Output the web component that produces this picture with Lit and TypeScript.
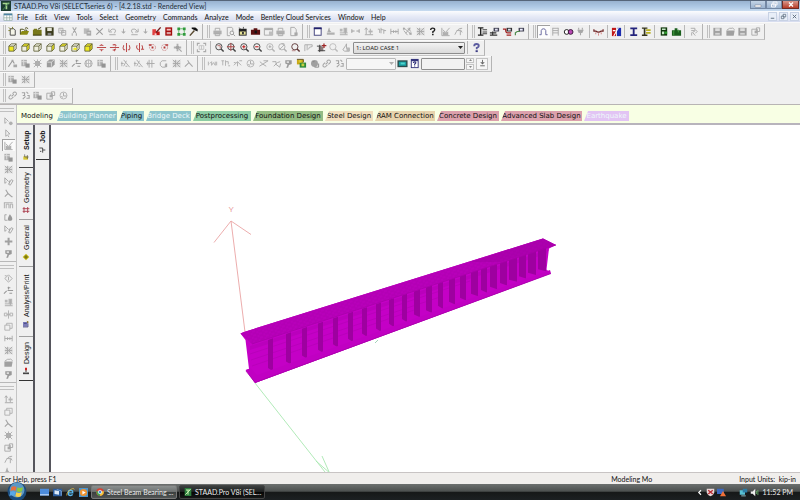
import { LitElement, html, css, svg, nothing } from "lit";
import { customElement } from "lit/decorators.js";
import { styleMap } from "lit/directives/style-map.js";
import { classMap } from "lit/directives/class-map.js";

const G = "#a8a8a8";

/* A stroked path and a filled path on the 12-unit icon grid. */
const s = (d: string, c = G, w = 1) => svg`<path d=${d} fill="none" stroke=${c} stroke-width=${w}></path>`;
const f = (d: string, c = G) => svg`<path d=${d} fill=${c}></path>`;

/* View cube with one or more faces painted yellow. */
const cube = (front: string, top: string, side: string) => svg`
  ${f("M2 4.500h5.500v5.500H2z", front)}${f("M2 4.500L4.500 2H10L7.500 4.500z", top)}${f("M7.500 4.500L10 2v5.500L7.500 10z", side)}
  ${s("M2 4.500h5.500v5.500H2zM2 4.500L4.500 2H10L7.500 4.500M10 2v5.500L7.500 10", "#5c5c34", 0.9)}`;
const Y = "#f0ea24";
const W = "#f0f0e0";
const lens = (c: string, inner: unknown = nothing) => svg`
  <circle cx="5.300" cy="5.200" r="3.400" fill="none" stroke=${c} stroke-width="1"></circle>
  ${s("M7.700 7.600L10.500 10.400", c, 1.6)}${inner}`;
const ring = (inner: unknown) => svg`<circle cx="6" cy="6" r="3.300" fill="none" stroke="#cc8c8c" stroke-dasharray="2 1"></circle>${inner}`;

const icons: Record<string, unknown> = {
  new: svg`${f("M3.500 3h5v7h-5z", "#f4f4e8")}${s("M3.500 3v7h5.500V4.500L7.500 3z", "#444")}${s("M2 1.500l2 2M6 1v2M1.500 5h2", "#7c7c28")}`,
  open: svg`${f("M1 9.500L3 5.500h8L9 9.500z", "#8a8a14")}${s("M1.500 9V3.500h3l1 1h3v1M6.500 2.500q2-1.500 3.500.5", "#444410")}`,
  close: svg`${f("M1 4h9.500v6H1zM2 3h3.500v1H2z", "#77771a")}${s("M6.500 3.500l3.500-2M1 10h9.500", "#333310")}`,
  save: svg`${f("M1.500 1.500h9v9h-9z", "#3c3c1c")}${f("M3.500 2h5v3.500h-5z", "#e6e6d8")}${f("M4 7.500h4v3H4z", "#888")}`,
  copy: svg`${s("M2 2.500h4.500v5H2zM5 5h4.500v5H5z")}${s("M3 4.500h2M6 7h2.500")}`,
  cut: s("M4 1.500l3.500 6M8 1.500L4.500 7.500M3.500 8v2.500M8 8v2.500", G, 1.1),
  paste: svg`${f("M2 2.500h6v6H2z", "#bbb")}${f("M5 5h5v5.500H5z")}${s("M4 2h2M6 7.500h3", "#eee")}`,
  delete: s("M2.500 2.500l7 7M9.500 2.500l-7 7", "#999", 1.1),
  undo: svg`${s("M2 3v3.500h3.500M2.500 6q3-4 6-2.500 2 1.500-.5 4.500M2.500 9.500h7")}`,
  redo: svg`${s("M10 3v3.500H6.500M9.500 6q-3-4-6-2.500-2 1.500.5 4.500M2.500 9.500h7")}`,
  down: svg`${f("M3.500 6h5L6 8.500z")}${s("M6 3v4")}`,
  edit: svg`${f("M1.500 3.500h4v6.500h-4z", "#e04040")}${f("M5.500 6h4v4h-4z", "#c01414")}${s("M10.500 1.500L5.500 7", "#702020", 1.5)}${f("M4 8h2v2H4z", "#f4d0d0")}`,
  calc: svg`${f("M2.500 1.500h7.500v9H2.500z", "#a40c0c")}${f("M4 3h4.500v2H4z", "#f3c3c3")}${f("M4 6.500h4.500v2.500H4z", "#dca0a0")}`,
  grid: svg`${f("M1.500 1.500h3v3h-3zM7.500 1.500h3v3h-3zM1.500 7.500h3v3h-3zM7.500 7.500h3v3h-3z", "#2f9a3c")}${s("M4.500 3h3M3 4.500v3M9 4.500v3M4.500 9h3", "#5cb464")}`,
  hammer: svg`${s("M2 10.500L7 5", "#5a4a30", 1.6)}${f("M4 1.500h4l2.500 2V6L8 5 4 3z", "#111")}`,
  print: svg`${f("M1.500 5h9v4h-9z", "#b0b0b0")}${s("M3.500 5V2.500h5V5M3.500 8.500h5v2h-5z")}`,
  preview: svg`${s("M2.500 1.500h5l1 1.500v3M2.500 1.500v9h3")}<circle cx="7.500" cy="7.500" r="2" fill="none" stroke="#999"></circle>${s("M9 9l2 2", "#999")}`,
  photo: svg`${f("M2 3h8.500v7.500H2z", "#222")}${f("M3 6h6.500v3.500H3z", "#e8e498")}${f("M5.500 6.500h2V9h-2z", "#333")}${s("M2 2l2 1M7 1v2", "#555")}`,
  camera: svg`${f("M1 4h10v5.500H1zM4 2.500h4V4H4z", "#5a1010")}${f("M5 5h2.500v3H5z", "#111")}`,
  window: svg`${s("M1.500 2.500h9v7.500h-9z")}${f("M1.500 2.500h9v2h-9z")}${f("M6.500 6h4v4h-4z", "#bdbdbd")}`,
  doc: svg`${s("M3 1.500h4L9 4v6.500H3z")}${f("M7 7h3.500v3.500H7z")}`,
  frame: svg`${f("M2.500 2.500h8v7.500h-8z", "#fff")}${s("M2.500 2.500h7.500v7.500H2.500z", "#4c4c84", 1.1)}${f("M2 1.500h8.500v2H2z", "#23236c")}`,
  hump: svg`${f("M2 7h8.500v2.500H2zM4 3l3 3.500H2.500z", "#b0b0b0")}${s("M4.500 2v5")}`,
  stack: svg`${f("M2 3h3v3H2zM6 2h4v5H6z", "#b8b8b8")}${s("M2 7.500h8.500M2 9.500h8.500M8 3v6")}`,
  dims: s("M2 3.500v4M10 3.500v4M2 5.500h3M7 5.500h3", "#999", 1),
  updim: svg`${s("M3.500 2v7M2 4l1.500-2L5 4M2 9.500h9M8 3v6")}${f("M6 5h4.500v2H6z", "#b4b4b4")}`,
  pins: s("M2 3.500h2v4M5.500 2v6M5.500 4h2M8.500 3.500v5M8.500 5h2.500"),
  beamdim: svg`${s("M2 3v6M10 3v6M2 6h8")}${f("M4.500 4.500h1v3h-1zM7 4.500h1v3H7z")}`,
  net: svg`${s("M2 2l8 7M2 5l4 5M4 8l5-6M6 3l4 3")}${f("M1 2h2v2H1zM8 7h2.500v2.500H8zM7 2h2v2H7z")}`,
  mesh: svg`${f("M2 2.500h8.500v7.500H2z", "#dadada")}${s("M2 2l8 8M10 2L2 10M5 2v8M2 6h8", "#a8a8a8")}`,
  chart: svg`${s("M2 2v8.500h8.500M3 4l3 3 4.500-5")}${f("M3 6l3 1 3-1v4H3z", "#b0b0b0")}`,
  curve: s("M2 9.500Q5 2 10 2.500M4 5h4v5M8 4l2 3"),
  q: svg`${s("M4 4.300q0-2 2.200-2t2.200 1.800q0 1.300-2 2.100v1.400", "#222", 1.5)}${f("M5.500 8.500h1.700v1.600H5.500z", "#222")}`,
  beamI: svg`${s("M1 2h6M4 2v8M1 10h6", "#222", 1.5)}${s("M6 4h5M6 6.500h5M6 8.500h5", "#444", 1.1)}`,
  beamP: svg`${f("M5 2h6v4H5z", "#445")}${f("M6.500 3h3v2h-3z", "#dde")}${s("M1 7.500h7M1 10h8M4 6v4", "#333", 1.3)}`,
  beamR: svg`${f("M5 2h6v4H5z", "#333")}${f("M6.500 3h3v2h-3z", "#dde")}${s("M1 3.500h3q0 4 2 4h4M5 10h5", "#a02020", 1.4)}`,
  beamG: svg`${f("M5 2h6v4H5z", "#445")}${f("M6.500 3h3v2h-3z", "#eef")}${s("M1.500 10V7.500l2-1.500h3", "#4c8a4c", 1.3)}`,
  arch: s("M1.500 9.500h2V5Q4 3 6 3t2.500 2v4.500h2", "#64649c", 1),
  ladder: s("M3 2v8.500M9 2v8.500M3 2.500h6M3 5h6M3 7.500h6"),
  pill: svg`<circle cx="4" cy="6.500" r="2.600" fill="#fff" stroke="#111"></circle><circle cx="8.300" cy="6.500" r="2.600" fill="#b848b4" stroke="#301030"></circle>`,
  plug: svg`${f("M2.500 4h7L8 7.500H4z")}${s("M4 2v2M8 2v2M6 7v3", G, 1.2)}`,
  sag: svg`${s("M1 3.500v2h2Q6 8 9 5.500h2v-2", "#6c2222", 1.3)}${s("M3 7v2M6 8v2.500M9 7v2", "#d88080")}`,
  flags: svg`${f("M1 2h4.500v9H1z", "#c01818")}${f("M6.500 2H11v9H6.500z", "#1c2cae")}${s("M8 2L3 11M2 5h3", "#fff", 1.2)}`,
  ibeam: svg`${f("M2.500 1.500h7.500v2H2.500zM2.500 9h7.500v2H2.500zM5.200 3h2v6.500h-2z", "#24247c")}`,
  ibeamY: svg`${f("M1 1.500h6v1.600H1zM1 9.400h6V11H1zM3 3h1.800v6.500H3z", "#34341c")}${f("M5.500 3.500h5v2h-5zM5.500 6.500h5v2h-5z", "#b8b020")}`,
  book: svg`${f("M3 1.500h7v9H3z", "#10380c")}${f("M4.300 2.800h4v1.600h-4zM4.300 6h2.500v3H4.300z", "#c8e8c8")}${f("M7 6h3v2.500H7z", "#2fa02f")}`,
  plant: svg`${f("M1 4.500h3V2.500h3v2h4V10.500H1z", "#1a5e1c")}${s("M3 5v5M8 4v3", "#48a048")}`,
  runner: s("M3 2.500h4.500v3L5 7l3 3.500M3.500 5H7M4 7v3.500M8 4l2 2-2 2"),
  disk: svg`${f("M1.500 2h9v8.500h-9z", "#a0a0a0")}${f("M3.500 2.500h5v3h-5z", "#ddd")}${f("M3.500 7.500h5v2h-5z", "#d4d4d4")}`,
  folder: svg`${f("M1.500 5h9l-1 5.500h-8z", "#a0a0a0")}${s("M2 4.500l3-2h3M8 2l2.500 2")}`,
  pack: svg`${s("M2 3.500h6v6.500H2zM7 2h3.500v4H7z")}${f("M5 5h3v3H5z")}`,
  c1: cube(Y, W, W), c2: cube(W, Y, Y), c3: cube(W, W, W), c4: cube(W, W, Y), c5: cube(W, Y, W), c6: svg`${cube(W, W, W)}${f("M3 8l2-2 3 1-2 2z", Y)}`, c7: cube(Y, Y, "#e0d418"),
  r1: s("M1 6h10M6 2.500v1.500M6 8v2M4 4q2-1.500 4 0M4 8q2 1.500 4 0", "#bc4c4c", 1.1),
  r2: s("M1 6h10M6 7.500V10M4 3.500q2-1.500 4 0.500M7 5v2M4 8.500q2 1 3.500-.5", "#bc4c4c", 1.1),
  r3: s("M6 1v10M3 3.500q-1.500 3 0 5h1.500M9 3.500q1.500 3 0 5H7.500", "#bc4c4c", 1.1),
  r4: s("M6 1v10M3.500 3.500q-2 3 1.500 5M8.500 3.500q2 3-.5 5M8 8h3", "#bc4c4c", 1.1),
  r5: ring(f("M5 5h2v2H5zM2 2.500h3v1.500H2z", "#b43434")),
  r6: ring(f("M5 5h2v2H5zM7 2.500h3v1.500H7z", "#b43434")),
  magn: svg`${f("M2 5h8v2H2zM5 2h2v8H5z", "#b0b0b0")}${s("M7.500 7.500L10.500 10.500", G, 1.4)}<circle cx="6" cy="6" r="2" fill="#a3a3a3"></circle>`,
  fit: svg`${s("M1.500 4V1.500H4M8 1.500h2.500V4M10.500 8v2.500H8M4 10.500H1.500V8", "#aaa", 1.2)}${s("M3.500 4h5v4h-5zM6 4v4", "#c4c4c4")}`,
  z1: lens("#444", s("M3.800 4h3v3", "#b46a6a")),
  z2: lens("#444", s("M1 5.200h8.500M5.300 1v8.500", "#a83c3c")),
  z3: lens("#444", s("M3.500 5.200h3.600M5.300 3.500v3.600", "#c02020", 1.2)),
  z4: lens("#444", s("M3.500 5.200h3.600", "#c02020", 1.2)),
  z5: lens("#b4b4b4", s("M4 5.200h3M5.300 3.500v3")), z6: lens("#b0b0b0", s("M3 8l5-5M5 2h3")), z7: svg`${lens("#5c3434")}${s("M2 9.500h4", "#b48080")}`, z9: lens("#bbb"),
  pan: svg`${s("M2 10V3h8v2M4.500 3v6M6 8q0-3 4-3", "#aaa")}`,
  picked: svg`${f("M3 5h5v5H3z", "#8c7c7c")}${f("M8 1.500h1.400v5H8zM6.300 3.300h5v1.400h-5z", "#a02828")}${s("M1 4.500h5M2 9.500h8M4 3v8", "#444")}`,
  hand: svg`${s("M2 8.500L5 4l1-2v5h3v3H4z")}${f("M6 6h3.500v4H6z", "#b8b8b8")}`,
  qBlue: svg`${s("M3.500 4.500q0-2.300 2.500-2.300t2.500 2.100q0 1.300-2.200 2.100v1.600", "#5c5ca0", 2)}${f("M5 9h2.400v2H5z", "#3c3c84")}`,
  node: svg`${s("M1.500 9.500L6 3l2 3", "#999", 1.2)}${f("M7 7h4v3H7zM5 2h2v2H5z")}`,
  plate: svg`${f("M1.500 2h6v7h-6z", "#b0b0b0")}${f("M6 6h4.500v4.500H6z", "#949494")}${s("M1.500 4h6M4 2v6", "#ddd")}`,
  star: svg`${f("M3.500 3.500h5v5h-5z", "#999")}${s("M2 2l8 8M10 2l-8 8M6 1.500v9M1.500 6h9", "#b0b0b0")}`,
  solid: svg`${f("M2 4l3-2.500h5.500V7L7.500 10H2z", "#9c9c9c")}${s("M2.500 4.500H7v5M7 4.500L10 2", "#ddd")}`,
  split: s("M1 9.500l3-3M6 5V2M8 3H5M5 6h6M7 9h3", "#999", 1.2),
  globe: svg`<circle cx="6" cy="6" r="4" fill="none" stroke="#aaa"></circle>${s("M2 6h8M6 2v8M4 3q-1 3 0 6M8 3q1 3 0 6", "#bbb")}`,
  wand: svg`${s("M2 9V4M1 6h3M4 2l6.500 8M7 3l-3 6M6 9h2", "#ababab")}`,
  hash: s("M4.500 2v8.500M7.500 2v8.500M1.500 6h9M3 4v4"),
  rot: svg`${s("M9 3H4.500L2.500 5v3L4.500 10H8V7")}${f("M8 6h2v4H8z")}`,
  hook: s("M2 9.500L6.500 5 5 2.500M6.500 5l4 4.500", "#a6a6a6", 1.1),
  wave: s("M1.500 4v4M3 6l2-2v4l2-3 2 3V4M10.500 4v4", "#b0b0b0"),
  pole: s("M3 3v5M6 2.500v6M6 4h3v3M1.500 3h3M9 8.500h2", "#b0b0b0"),
  strut: s("M2 8l4-4 4 4M6 4v5M2 5h2M8 3h3", "#acacac"),
  cycle: svg`<circle cx="6" cy="6" r="3.800" fill="none" stroke="#b4b4b4"></circle>${s("M6 3v3.500h3.500M3.500 7l2 1", "#a8a8a8")}`,
  fly: s("M1.500 9l4-2.500 5.500-3.500M2 4l3 2.500L9 9M6 3h5", "#aaa"),
  tie: s("M1.500 4h4v3l4 3 1-4M3 9l4-4 3-1", "#aaa"),
  bulb: svg`${f("M2.500 2.500h7v4l-3 1-1 3h-2l1.500-3.500-2.500-1z", "#999")}${f("M4 3.500h2.500v2H4z", "#ddd")}`,
  palette: svg`${f("M1 2h7v5H1z", "#c8a818")}${f("M4 5h7v5.500H4z", "#2c8a3c")}${f("M3 2h3v3H3z", "#dcc830")}${f("M6 6h3v3H6z", "#c4d040")}${s("M1 1.500h7v3", "#604c10")}`,
  ball: svg`<circle cx="6" cy="6" r="3.800" fill="#a0a0a0"></circle>${s("M6 10h4.500V6M4 4h2", "#888")}`,
  link: svg`${s("M5 7L7.500 4.500M4.500 5l-2 2q-1 2 .5 2.700t2.500-.7l1.500-1.500M6 4l1.500-1.500Q9 1.500 10 3t-.5 2.500L8 7", "#a4a4a4", 1.1)}`,
  unlink: svg`${s("M2 3h3v3H3M7 2l2 2M8 6h2v3H7M3 10l3-3", "#a4a4a4", 1.2)}`,
  screen: svg`${f("M0.500 2.500h11v7.500h-11z", "#2c4c4c")}${f("M2 4h8v4.500H2z", "#18a0a4")}${f("M4 5h4.500v2H4z", "#50d4cc")}`,
  help: svg`${f("M2 1h8.500v10H2z", "#34347c")}${f("M3 3.500h6.500v6.500H3z", "#fff")}${s("M4.700 5.500q0-1.300 1.400-1.300t1.400 1q0 .8-1.300 1.300v1", "#34347c", 1.2)}${f("M5.600 8.200h1.200v1.200H5.600z", "#34347c")}`,
  cursor: svg`${s("M3 2v7l2-1.500L6.500 10M3 2l4.500 4.500h-2", "#aaa")}`,
  cursorN: svg`${s("M2 2v6l2-1.500M2 2l4 4", "#aaa")}<circle cx="8.500" cy="8" r="2" fill="#b0b0b0"></circle>`,
  cursorP: svg`${s("M2 2v6l2-1.500M2 2l4 4M6 9l3-5 2 1-3 5zM7 5v3", "#a4a4a4")}`,
  text: svg`${s("M1.500 3v6M3.500 9V4.500h3V9M8 9V4.500h2.500V9M1 3h9.500", "#ababab", 1)}`,
  drop: svg`${s("M2 3v6h3M2 3h2", "#a4a4a4")}${f("M7.500 2.500Q12 8 9 9.500H6Q4 7.500 7.500 2.500z", "#999")}`,
  plus: f("M5 2h2.200v3h3v2.200h-3v3H5v-3H2V5h3z", "#a0a0a0"),
  angle: s("M3 2l2.500 4L2 9.500M5.500 6l4 3.500h1", "#a4a4a4", 1.2),
  box: s("M2 4.500h5.500V10H2zM4 4.500V2.500h6v5.500H7.500", "#b0b0b0"),
  cross: s("M6 1.500v9M1.500 4.500h3v3h-3zM7.500 4.500h3v3h-3zM4 6h4", "#b0b0b0"),
  diamond: s("M6 2l4 4-4 4-4-4zM6 4v4M2 3h2", "#aaa"),
};

interface Group { width: number; names: string; rest?: string; }

const rows: Group[][] = [
  [
    { width: 194, names: "new open close save copy cut paste delete undo down redo down edit calc grid hammer" },
    { width: 89, names: "print preview photo camera window print doc" },
    { width: 154, names: "frame hump stack dims updim pins beamdim net mesh q chart curve" },
    { width: 50, names: "beamI beamP beamR beamG" },
    { width: 163, names: "arch! ladder pill plug | sag | flags | ibeam ibeamY | book plant | runner" },
    { width: 51, names: "disk folder disk pack" },
  ],
  [
    { width: 178, names: "c1 c2 c3 c4 c5 c6 c7 r1 r2 r3 r4 r5 r6 magn" },
    { width: 158, names: "fit | z1 z2 z3 z4 z5 z6 z7 pan picked z9 hand", rest: "load" },
  ],
  [
    { width: 102, names: "node plate star solid mesh split globe plate" },
    { width: 76, names: "wand wand hash rot mesh hook" },
    { width: 140, names: "wave pole strut cycle fly tie bulb palette ball link unlink", rest: "result" },
  ],
  [{ width: 26, names: "plate mesh" }],
  [{ width: 64, names: "link unlink plate pack cycle" }],
];

const sideGroups = [
  "cursorN cursor chart! plate mesh cursorP angle text drop cursorP plus bulb",
  "diamond split stack cross box beamdim mesh folder bulb",
  "updim box angle star pack curve hump",
];

const modes = [
  ["Modeling", "plain", 34], ["Building Planner", "teal pale", 60], ["Piping", "teal", 25],
  ["Bridge Deck", "teal pale", 45], ["Postprocessing", "green", 58], ["Foundation Design", "olive", 70],
  ["Steel Design", "sand", 48], ["RAM Connection", "tan", 60], ["Concrete Design", "rose", 62],
  ["Advanced Slab Design", "rose", 81], ["Earthquake", "lilac pale", 45],
] as const;

const pages = [
  { label: "Setup", height: 43, icon: svg`${f("M2 5h7v5H2z", "#d8c830")}${s("M4 2v4h6M8 3v6", "#555")}` },
  { label: "Geometry", height: 52, icon: s("M3 1.500v9M8.500 1.500v9M1 4h10M1 8h10", "#a83848", 1.3) },
  { label: "General", height: 47, icon: svg`${f("M6 1l5 5-5 5-5-5z", "#c8bc18")}${s("M6 3v6M3 6h6", "#50500c", 1.1)}` },
  { label: "Analysis/Print", height: 70, icon: svg`${f("M1.500 3h7v7h-7z", "#7c7cb8")}${s("M1.500 10.500H9V5M3 5h4", "#30306c")}${f("M7 1l3.500 2L8 5z", "#806c20")}` },
  { label: "Design", height: 44, icon: svg`${s("M1.500 10h9M6 4v6M3 7.500v3M9 7.500v3", "#222", 1.3)}${f("M4.500 1h3v4h-3z", "#c82424")}` },
];

/* Left and right edge of every web stiffener along the girder. */
const stiffeners = [
  [268, 273], [286, 291], [302, 307], [318, 323], [333, 338], [348, 353], [362, 367], [376, 381],
  [389, 394], [402, 407], [414, 420], [426, 432], [438, 443], [449, 455], [460, 466], [471, 478],
  [481, 487], [490, 497], [500, 507], [509, 517], [519, 526], [528, 536], [538, 546],
];

const draw = (name: string) => svg`<svg class="ic" viewBox="0 0 12 12" aria-hidden="true">${icons[name]}</svg>`;

const tool = (token: string) => {
  if (token === "|") return html`<i class="sep"></i>`;
  const pressed = token.endsWith("!");
  const name = pressed ? token.slice(0, -1) : token;
  return html`<button class=${classMap({ tool: true, pressed, narrow: name === "down" })} aria-label=${name}>${draw(name)}</button>`;
};

@customElement("staad-toolbars")
class StaadToolbars extends LitElement {
  static styles = css`
    :host { display: block; background: #f0f0f0; border-bottom: 1px solid #b8b4b4; }
    .row { display: flex; height: 16px; }
    .row:first-child { padding-top: 1px; }
    .group { display: flex; align-items: center; border-right: 1px solid #b4b4b4; border-bottom: 1px solid #c4c4c4; padding-right: 2px; box-shadow: inset 0 1px #fafafa; }
    .grip { box-sizing: border-box; width: 3px; height: 13px; margin: 0 1px 0 4px; border-left: 1px solid #c0c0c0; border-right: 1px solid #c0c0c0; flex: none; }
    .group:first-child .grip { margin: 0 0 0 3px; }
    .tools { display: flex; align-items: center; }
    .tool { flex: 8 1 0; min-width: 0; height: 13px; padding: 0; border: 0; background: none; display: flex; justify-content: center; align-items: center; }
    .narrow { flex-grow: 6; }
    .pressed { background: #fdfdfd; box-shadow: inset 1px 1px #a0a0a0; }
    .ic { width: 11px; height: 11px; flex: none; }
    .sep { width: 1px; height: 13px; background: #b8b8b8; margin: 0 2px; flex: none; }
    select, input { box-sizing: border-box; height: 12px; font: 6px "Noto Sans", sans-serif; color: #222; border: 1px solid #b8b8b8; border-radius: 1px; padding: 0 2px; margin: 0; appearance: none; background: #f6f6f6; }
    .pick { position: relative; display: flex; }
    .pick svg { position: absolute; right: 2px; top: 4px; width: 5px; height: 4px; }
    .load { width: 112px; background: linear-gradient(#f2f2f2, #dadada); border-color: #8c8c8c; }
    .result { width: 50px; }
    .value { width: 44px; border-color: #8e8e8e; background: #f2f2f2; margin: 0 1px; }
    .solo { flex: none; width: 12px; }
    .spin { width: 8px; height: 12px; display: grid; gap: 1px; }
    .spin button, .drop { border: 1px solid #c4c4c4; background: #f6f6f6; padding: 0; margin: 0; display: flex; align-items: center; justify-content: center; }
    .spin svg { width: 3px; height: 2px; }
    .drop { width: 12px; height: 12px; margin: 0 1px 0 2px; }
  `;
  render() {
    return rows.map((row) => html`<div class="row">${row.map((g) => html`
      <div class="group"><i class="grip"></i>
        <div class="tools" style=${styleMap({ width: `${g.width}px` })}>${g.names.split(" ").map(tool)}</div>
        ${g.rest === "load" ? this.load() : g.rest === "result" ? this.result() : nothing}
      </div>`)}</div>`);
  }
  private load() {
    return html`<span class="pick"><select class="load" aria-label="Load case"><option>1: LOAD CASE 1</option></select>
      <svg viewBox="0 0 5 4">${f("M0 0h5L2.500 3z", "#222")}</svg></span>
      <i class="sep"></i><button class="tool solo" aria-label="Help">${draw("qBlue")}</button>`;
  }
  private result() {
    return html`<span class="pick"><select class="result" aria-label="Result"><option></option></select>
      <svg viewBox="0 0 5 4">${f("M0 0h5L2.500 3z", "#b0b0b0")}</svg></span>
      <button class="tool solo" aria-label="Display">${draw("screen")}</button>
      <button class="tool solo" aria-label="Query">${draw("help")}</button>
      <input class="value" aria-label="Value" />
      <span class="spin"><button aria-label="Up"><svg viewBox="0 0 3 2">${f("M0 2h3L1.500 0z", "#888")}</svg></button>
        <button aria-label="Down"><svg viewBox="0 0 3 2">${f("M0 0h3L1.500 2z", "#888")}</svg></button></span>
      <button class="drop" aria-label="Apply"><svg class="ic" viewBox="0 0 12 12">${f("M3.500 4.500h5L6 7z", "#666")}${s("M6 2v3M3.500 8.500h5", "#666")}</svg></button>`;
  }
}

@customElement("staad-view")
class StaadView extends LitElement {
  static styles = css`
    :host { display: block; flex: 1; min-width: 0; background: #fff; overflow: hidden; }
    .scene { display: block; width: 100%; height: 100%; }
    .axis { font: 8px "Liberation Sans", sans-serif; fill: #e89a9a; }
  `;
  render() {
    const top = (x: number) => 340 - (x - 268) * 0.332;
    const bottom = (x: number) => 371 - (x - 268) * 0.366;
    return html`<svg class="scene" viewBox="51 125 749 347" preserveAspectRatio="xMinYMin slice" role="img" aria-label="Rendered steel girder">
      <defs><pattern id="grain" width="6" height="4" patternUnits="userSpaceOnUse" patternTransform="rotate(-17)">
        <path d="M0 1h4M3 3h3" stroke="#980098" stroke-width="0.700"></path></pattern></defs>
      <path d="M245 332L231 221M214 242.500L231 221L251 234.500" fill="none" stroke="#eaa4a4" stroke-width="0.900"></path>
      <text class="axis" x="228.500" y="212">Y</text>
      <path d="M255 383L325 472M316 461L331 474M322 456L330 474" fill="none" stroke="#a8e8b0" stroke-width="0.900"></path>
      <path d="M375 343l3-3" stroke="#8cc8a8" stroke-width="0.800"></path>
      <path d="M240.500 333.500L244 332L543 238.500L556 245L549 248.500L546.500 269.500L551 273.500L255 383L245.500 370L249 369L245.500 340z" fill="#c400c6"></path>
      <path d="M240.500 333.500L244 332L543 238.500L556 245L252 344z" fill="#b800ba"></path>
      <path d="M240.500 333.500L244 332L543 238.500L556 245L252 344z" fill="url(#grain)" opacity="0.450"></path>
      <path d="M470 262L543 238.500L556 245L500 262z" fill="#9c009e" opacity="0.400"></path>
      <path d="M250 346L549 249.500L546 254L250 350z" fill="#ba00bc"></path>
      <path d="M250 354L470 281M251 360L440 297M252 366L420 308" stroke="#b400b6" stroke-width="0.700" fill="none"></path>
      ${stiffeners.map(([a, b]) => svg`<path d=${`M${a} ${top(a)}L${b} ${top(b)}L${b} ${bottom(b) + 2}L${a} ${bottom(a) - 3}z`} fill="#9e00a0"></path>`)}
      <path d="M246 370L251 368L257 375L550 270L551 273.500L255 383z" fill="#c000c2"></path>
      <path d="M246 371L255 382.500L551 273.500M252 344L556 245" fill="none" stroke="#a800aa" stroke-width="0.800"></path>
    </svg>`;
  }
}

@customElement("app-root")
class AppRoot extends LitElement {
  static styles = css`
    :host { display: flex; flex-direction: column; height: 100vh; overflow: hidden; background: #f0f0f0; color: #101010; font: 7px/8px Lato, sans-serif; }
    button { font: inherit; color: inherit; padding: 0; margin: 0; border: 0; background: none; }
    .ic { width: 11px; height: 11px; flex: none; }
    .title { display: flex; align-items: center; height: 11px; box-sizing: border-box; border-top: 1px solid #56657a; background: linear-gradient(#98b2d0, #b0cae6 60%, #c8dcf0); padding-left: 1px; gap: 3px; color: #222c38; }
    .title .ic { width: 10px; height: 10px; }
    .title .name { flex: 1; }
    .wins { display: flex; align-self: flex-start; }
    .win { width: 16px; height: 8px; background: linear-gradient(#c4d4e6, #9cb4d0); border: 1px solid #7488a4; border-top: 0; box-sizing: border-box; display: flex; justify-content: center; }
    .win.x { background: linear-gradient(#d8988c, #b83c28); border-color: #702c24; margin-right: 1px; width: 17px; }
    .win svg { width: 8px; height: 7px; }
    .menu { display: flex; align-items: center; height: 12px; padding-left: 3px; background: linear-gradient(#fbfcfe, #e6eaf6 50%, #d6dcee); box-sizing: border-box; border-bottom: 1px solid #f8f8f8; }
    .menu .ic { width: 10px; height: 10px; margin-right: 4px; }
    .menu nav { display: flex; flex: 1; gap: 7px; }
    .mdi { display: flex; gap: 2px; padding-right: 1px; }
    .mdi button { width: 9px; height: 9px; background: #e8eef8; border: 1px solid #c8d2e4; display: flex; box-sizing: border-box; }
    .main { flex: 1; display: flex; min-height: 0; }
    .side { width: 17px; box-sizing: border-box; border-right: 1px solid #c4c4c4; overflow: hidden; padding-top: 3px; flex: none; }
    .bar { display: grid; grid-auto-rows: 12px; justify-items: center; padding-bottom: 2px; border-bottom: 1px solid #b8b8b8; margin-bottom: 3px; }
    .grip { display: block; width: 14px; height: 2px; border: solid #c0c0c0; border-width: 1px 0; margin-bottom: 3px; }
    .side .tool { width: 13px; height: 12px; display: flex; align-items: center; justify-content: center; }
    .side .pressed { background: #fbfbfb; box-shadow: inset 1px 1px #a0a0a0; }
    .work { flex: 1; display: flex; flex-direction: column; min-width: 0; }
    .modes { display: flex; align-items: flex-end; height: 20px; box-sizing: border-box; gap: 2px; padding: 0 0 2px 4px; background: #f8ffe4; border-bottom: 2px solid #b8b4bc; font: 7px/10px "DejaVu Sans", sans-serif; }
    .mode { height: 10px; text-align: center; white-space: nowrap; clip-path: polygon(4px 0, 100% 0, 100% 100%, 0 100%); flex: none; }
    .mode.plain { clip-path: none; text-align: left; }
    .teal { background: #8cc4cc; } .green { background: #8ccca4; } .olive { background: #94bc84; }
    .sand { background: #f0dcbc; } .tan { background: #e6d2ac; } .rose { background: #dca0ac; } .lilac { background: #e2c4f4; }
    .pale { color: #eef8fa; }
    .lower { flex: 1; display: flex; min-height: 0; }
    .pages { width: 16px; flex: none; border-right: 2px solid #55555c; background: #f0f0f0; padding-left: 1px; box-sizing: border-box; }
    .pages.first { width: 18px; padding-left: 2px; }
    .page { width: 100%; display: flex; writing-mode: vertical-rl; transform: rotate(180deg); align-items: center; justify-content: center; gap: 3px; font: 7px/9px "Liberation Sans", sans-serif; border-top: 1px solid #a0a0a0; box-sizing: border-box; }
    .page svg { width: 8px; height: 8px; transform: rotate(180deg); flex: none; }
    .page.on { font-weight: bold; border-top-color: #444; }
    .page:last-child { border-top-color: #333; }
    .status { display: flex; align-items: center; height: 12px; box-sizing: border-box; border-top: 1px solid #c8c4c4; background: #f0eeec; padding: 1px 4px 0 1px; }
    .status .help { flex: 1; }
    .status .mode-name { width: 128px; }
    .task { display: flex; align-items: center; height: 16px; background: linear-gradient(#6c706f, #4c504f 45%, #161818 52%, #1c2022); color: #ececec; flex: none; }
    .orb { width: 22px; height: 20px; margin: -3px 12px 0 6px; position: relative; }
    .orb svg { width: 22px; height: 20px; display: block; }
    .quick { display: flex; gap: 4px; margin-right: 3px; }
    .quick svg { width: 9px; height: 9px; display: block; }
    .app { display: flex; align-items: center; gap: 3px; width: 86px; height: 14px; box-sizing: border-box; border: 1px solid #777; border-radius: 2px; padding: 0 4px; margin-right: 2px; white-space: nowrap; background: linear-gradient(#8c908f, #6c7070 48%, #3c4040 54%, #505454); }
    .app svg { width: 8px; height: 8px; flex: none; }
    .app.on { background: linear-gradient(#3c4040, #1c1e1e 48%, #060606 54%, #161818); border-color: #444; }
    .tray { margin-left: auto; display: flex; align-items: center; gap: 2px; padding-right: 7px; }
    .tray svg { width: 9px; height: 9px; }
    .tray .clock { margin-left: 2px; }
  `;
  render() {
    return html`
      <header class="title">
        <svg class="ic" viewBox="0 0 12 12">${f("M0 0h12v12H0z", "#1c3c30")}${f("M2 2h8v2H7.500v6h-2V4H2z", "#a8d890")}${s("M2 11L10 1", "#4c8c5c")}</svg>
        <span class="name">STAAD.Pro V8i (SELECTseries 6) - [4.2.18.std - Rendered View]</span>
        <span class="wins">
          <button class="win" aria-label="Minimize"><svg viewBox="0 0 8 7">${f("M1 4h6v2H1z", "#fff")}${s("M1 4h6v2H1z", "#667", 0.4)}</svg></button>
          <button class="win" aria-label="Restore"><svg viewBox="0 0 8 7">${s("M3 1h4v3H3zM1.500 3h4v3h-4z", "#f4f4f8", 1)}</svg></button>
          <button class="win x" aria-label="Close"><svg viewBox="0 0 8 7">${s("M2 1.500l4 4M6 1.500l-4 4", "#fff", 1.3)}</svg></button>
        </span>
      </header>
      <div class="menu">
        <svg class="ic" viewBox="0 0 12 12">${f("M1 2h10v8H1z", "#fff")}${s("M1 2h10v8H1zM1 7h10M4.500 4v6M8 4v6", "#84a098", 0.8)}${f("M1 2h10v2H1z", "#4c84a4")}</svg>
        <nav>${["File", "Edit", "View", "Tools", "Select", "Geometry", "Commands", "Analyze", "Mode", "Bentley Cloud Services", "Window", "Help"].map((m) => html`<button>${m}</button>`)}</nav>
        <span class="mdi">
          <button aria-label="Minimize view"><svg viewBox="0 0 8 8">${s("M2 6h4", "#567")}</svg></button>
          <button aria-label="Restore view"><svg viewBox="0 0 8 8">${s("M3.500 1.500h3v3h-3zM1.500 3.500h3v3h-3z", "#567", 0.8)}</svg></button>
          <button aria-label="Close view"><svg viewBox="0 0 8 8">${s("M2 2l4 4M6 2L2 6", "#567")}</svg></button>
        </span>
      </div>
      <staad-toolbars></staad-toolbars>
      <div class="main">
        <div class="side">${sideGroups.map((g) => html`<i class="grip"></i><div class="bar">${g.split(" ").map(tool)}</div>`)}</div>
        <div class="work">
          <div class="modes">${modes.map(([label, tone, width]) => html`<button class="mode ${tone}" style=${styleMap({ width: `${width}px` })}>${label}</button>`)}</div>
          <div class="lower">
            <div class="pages first">${pages.map((p, i) => html`<button class=${classMap({ page: true, on: i === 0 })} style=${styleMap({ height: `${p.height}px` })}>
              <svg viewBox="0 0 12 12">${p.icon}</svg>${p.label}</button>`)}</div>
            <div class="pages"><button class="page on" style=${styleMap({ height: "35px" })}>
              <svg viewBox="0 0 12 12">${s("M2 3h5v3h4M7 6v4M3 8h2", "#333", 1.3)}</svg>Job</button></div>
            <staad-view></staad-view>
          </div>
        </div>
      </div>
      <footer class="status"><span class="help">For Help, press F1</span><span class="mode-name">Modeling Mo</span><span>Input Units:&nbsp; kip-in</span></footer>
      <div class="task">
        <button class="orb" aria-label="Start"><svg viewBox="0 0 22 20"><circle cx="11" cy="10.500" r="9.500" fill="#1c4c7c"></circle><circle cx="11" cy="9" r="7.500" fill="#5c98c4"></circle>
          ${f("M5.500 6q2.500-1.500 5 0l-1 4q-2-1.500-5 0z", "#e8703c")}${f("M11.500 6.300q2.500 1.300 5.500 0l-1 4q-2.500 1.300-5.500 0z", "#8cc83c")}${f("M4.300 11q2.500-1.500 5 0l-1 4q-2-1.500-5 0z", "#58a8e8")}${f("M10.300 11.300q2.500 1.300 5.500 0l-1 4q-2.500 1.300-5.500 0z", "#f8d048")}</svg></button>
        <div class="quick">
          <button aria-label="Desktop"><svg viewBox="0 0 12 12">${f("M0 1h12v9H0z", "#4c8cdc")}${f("M0 8h12v2H0z", "#a8c8f0")}</svg></button>
          <button aria-label="Switch windows"><svg viewBox="0 0 12 12">${f("M0 1h12v10H0z", "#2c5c9c")}${f("M2 3l6 1v5L2 8z", "#dceaf8")}${s("M5 2l6 2v6", "#90b8e0")}</svg></button>
          <button aria-label="Internet Explorer"><svg viewBox="0 0 12 12">${s("M3 6.500h6Q9 3 6 3T3 6.500 6 10q2 0 2.800-1.500", "#58b8f0", 1.8)}${s("M1 10Q0 7 5 3t6-1", "#f0c840", 1)}</svg></button>
          <button aria-label="Media Player"><svg viewBox="0 0 12 12">${f("M0 0h12v12H0z", "#4c94cc")}<circle cx="6" cy="6" r="4.800" fill="#f09430"></circle>${f("M4.500 3.500l4.500 2.500-4.500 2.500z", "#fff")}</svg></button>
        </div>
        <button class="app"><svg viewBox="0 0 12 12"><circle cx="6" cy="6" r="5.800" fill="#d84030"></circle>${f("M0.500 4L6 6v6Q0 11 .5 4z", "#48a04c")}${f("M6 12q6-.5 5.800-7H7z", "#f0c838")}<circle cx="6" cy="6" r="2.600" fill="#4c88e0" stroke="#fff"></circle></svg>Steel Beam Bearing ...</button>
        <button class="app on"><svg viewBox="0 0 12 12">${f("M1 0h10v12H1z", "#2c7c3c")}${s("M3 3h6M6 3v7M2 10l8-8", "#c8f0b0", 1.5)}</svg>STAAD.Pro V8i (SEL...</button>
        <div class="tray">
          <svg viewBox="0 0 12 12">${s("M8 3L5 6l3 3", "#fff", 1.5)}</svg>
          <svg viewBox="0 0 12 12">${f("M1 1h10v5q-1 4-5 5-4-1-5-5z", "#e8d8d8")}${s("M3 3l6 5M9 3L3 8", "#b82c34", 1.8)}</svg>
          <svg viewBox="0 0 12 12">${f("M0 1h9v7H0z", "#3c68c0")}${f("M4 11l4-7 4 7z", "#f07038")}</svg>
          <svg viewBox="0 0 12 12"></svg>
          <svg viewBox="0 0 12 12">${f("M1 3h7v6H1z", "#58c0d4")}${f("M5 1h6v5H5z", "#2c7ca4")}${s("M3 10.500h6", "#b8ecf4")}</svg>
          <svg viewBox="0 0 12 12">${f("M1 4.500h2.500L7 1v10L3.500 7.500H1z", "#eee")}${s("M8.500 4v4M10.500 2.500v7", "#78c878")}</svg>
          <span class="clock">11:52 PM</span>
        </div>
      </div>`;
  }
}
